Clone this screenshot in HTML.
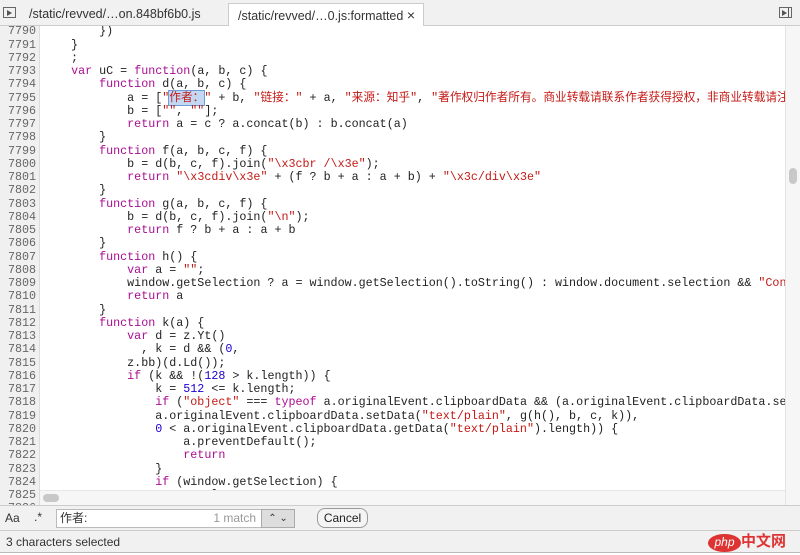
<!DOCTYPE html>
<html><head><meta charset="utf-8"><style>
*{margin:0;padding:0;box-sizing:border-box}
body{width:800px;height:555px;overflow:hidden;background:#fff;font-family:"Liberation Sans","Noto Sans CJK SC",sans-serif;position:relative}
#tabs{position:absolute;left:0;top:0;width:800px;height:26px;background:#f1f1f1;border-bottom:1px solid #ccc}
.tab{position:absolute;top:3px;height:23px;font-size:12.5px;color:#333;line-height:23px;padding-left:9px}
#t2{left:228px;width:196px;background:#fff;border:1px solid #ccc;border-bottom:none}
#code{position:absolute;left:0;top:26px;width:785px;height:479px;overflow:hidden;background:#fff}
#gut{position:absolute;left:0;top:0;width:40px;height:479px;background:#f0f0f0;border-right:1px solid #ddd}
.l{position:absolute;left:0;height:13.25px;line-height:13.25px;font-family:"Liberation Mono","Noto Sans CJK SC",monospace;font-size:11.7px;white-space:pre;color:#222}
.n{width:36px;text-align:right;color:#666}
.c{left:43px}
.k{color:#aa0d91}.s{color:#c41a16}.d{color:#1c00cf}
.hl{background:#c3d8f3;outline:1px solid #6f9bd6}
#vs{position:absolute;left:785px;top:26px;width:15px;height:479px;background:#f6f6f6;border-left:1px solid #e4e4e4}
#hs{position:absolute;left:40px;top:490px;width:745px;height:15px;background:#f6f6f6;border-top:1px solid #e8e8e8}
#search{position:absolute;left:0;top:505px;width:800px;height:25px;background:#f1f1f1;border-top:1px solid #ccc}
#status{position:absolute;left:0;top:530px;width:800px;height:23px;background:#f1f1f1;border-top:1px solid #ccc;border-bottom:1px solid #bbb;font-size:12px;color:#333;line-height:22px;padding-left:6px}
</style></head><body>
<div id="tabs">
<div style="position:absolute;left:3px;top:7px;width:13px;height:11px;border:1px solid #666"></div>
<div style="position:absolute;left:7px;top:10px;width:0;height:0;border-left:5px solid #555;border-top:3px solid transparent;border-bottom:3px solid transparent"></div>
<div class="tab" style="left:20px">/static/revved/…on.848bf6b0.js</div>
<div class="tab" id="t2">/static/revved/…0.js:formatted <span style="font-size:14px">×</span></div>
<div style="position:absolute;left:779px;top:7px;width:13px;height:11px;border:1px solid #666"></div>
<div style="position:absolute;left:782px;top:10px;width:0;height:0;border-left:5px solid #555;border-top:3px solid transparent;border-bottom:3px solid transparent"></div>
<div style="position:absolute;left:788px;top:8px;width:1px;height:9px;background:#555"></div>
</div>
<div id="code"><div id="gut"></div>
<div id="lines"></div>
</div>
<div id="vs"><div style="position:absolute;left:3px;top:142px;width:8px;height:16px;border-radius:4px;background:#c8c8c8"></div></div>
<div id="hs"><div style="position:absolute;left:3px;top:3px;width:16px;height:8px;border-radius:4px;background:#c8c8c8"></div></div>
<div id="search">
<span style="position:absolute;left:5px;top:5px;font-size:12px;color:#333">Aa</span>
<span style="position:absolute;left:34px;top:4px;font-size:12px;color:#333">.*</span>
<div style="position:absolute;left:56px;top:3px;width:206px;height:19px;background:#fff;border:1px solid #bbb;font-size:12px;line-height:17px;padding-left:3px;color:#333">作者:<span style="position:absolute;right:5px;color:#999">1 match</span></div>
<div style="position:absolute;left:261px;top:3px;width:34px;height:19px;background:#ddd;border:1px solid #aaa;font-size:10px;line-height:17px;text-align:center;color:#333">⌃ ⌄</div>
<div style="position:absolute;left:317px;top:2px;width:51px;height:20px;background:#f4f4f4;border:1px solid #999;border-radius:8px;font-size:12px;line-height:18px;text-align:center;color:#222">Cancel</div>
</div>
<div id="status">3 characters selected
<span style="position:absolute;left:708px;top:3px;width:33px;height:18px;background:#d33;border-radius:50%;color:#fff;font-style:italic;font-size:12px;line-height:17px;text-align:center">php</span>
<span style="position:absolute;left:741px;top:0;font-size:15px;color:#d33;font-weight:bold">中文网</span>
</div>
<script>
const L=[
'        })',
'    }',
'    ;',
'    <k>var</k> uC = <k>function</k>(a, b, c) {',
'        <k>function</k> d(a, b, c) {',
'            a = [<s>"<h>作者：</h>"</s> + b, <s>"链接："</s> + a, <s>"来源：知乎"</s>, <s>"著作权归作者所有。商业转载请联系作者获得授权，非商业转载请注明出处。"</s>],',
'            b = [<s>""</s>, <s>""</s>];',
'            <k>return</k> a = c ? a.concat(b) : b.concat(a)',
'        }',
'        <k>function</k> f(a, b, c, f) {',
'            b = d(b, c, f).join(<s>"\\x3cbr /\\x3e"</s>);',
'            <k>return</k> <s>"\\x3cdiv\\x3e"</s> + (f ? b + a : a + b) + <s>"\\x3c/div\\x3e"</s>',
'        }',
'        <k>function</k> g(a, b, c, f) {',
'            b = d(b, c, f).join(<s>"\\n"</s>);',
'            <k>return</k> f ? b + a : a + b',
'        }',
'        <k>function</k> h() {',
'            <k>var</k> a = <s>""</s>;',
'            window.getSelection ? a = window.getSelection().toString() : window.document.selection && <s>"Control"</s>',
'            <k>return</k> a',
'        }',
'        <k>function</k> k(a) {',
'            <k>var</k> d = z.Yt()',
'              , k = d && (<d>0</d>,',
'            z.bb)(d.Ld());',
'            <k>if</k> (k && !(<d>128</d> > k.length)) {',
'                k = <d>512</d> <= k.length;',
'                <k>if</k> (<s>"object"</s> === <k>typeof</k> a.originalEvent.clipboardData && (a.originalEvent.clipboardData.setData',
'                a.originalEvent.clipboardData.setData(<s>"text/plain"</s>, g(h(), b, c, k)),',
'                <d>0</d> < a.originalEvent.clipboardData.getData(<s>"text/plain"</s>).length)) {',
'                    a.preventDefault();',
'                    <k>return</k>',
'                }',
'                <k>if</k> (window.getSelection) {',
'                    <k>var</k> l = ...',
'                }'];
let h='';
L.forEach((t,i)=>{const y=(-0.6+i*13.25).toFixed(2);
t=t.replace(/</g,'&lt;').replace(/>/g,'&gt;').replace(/&lt;(\/?)(k|s|d|h)&gt;/g,(m,a,b)=>a?'</span>':'<span class="'+(b=='h'?'hl':b)+'">');
h+=`<div class="l n" style="top:${y}px">${7790+i}</div><div class="l c" style="top:${y}px">${t}</div>`;});
document.getElementById('lines').innerHTML=h;
</script>
</body></html>
